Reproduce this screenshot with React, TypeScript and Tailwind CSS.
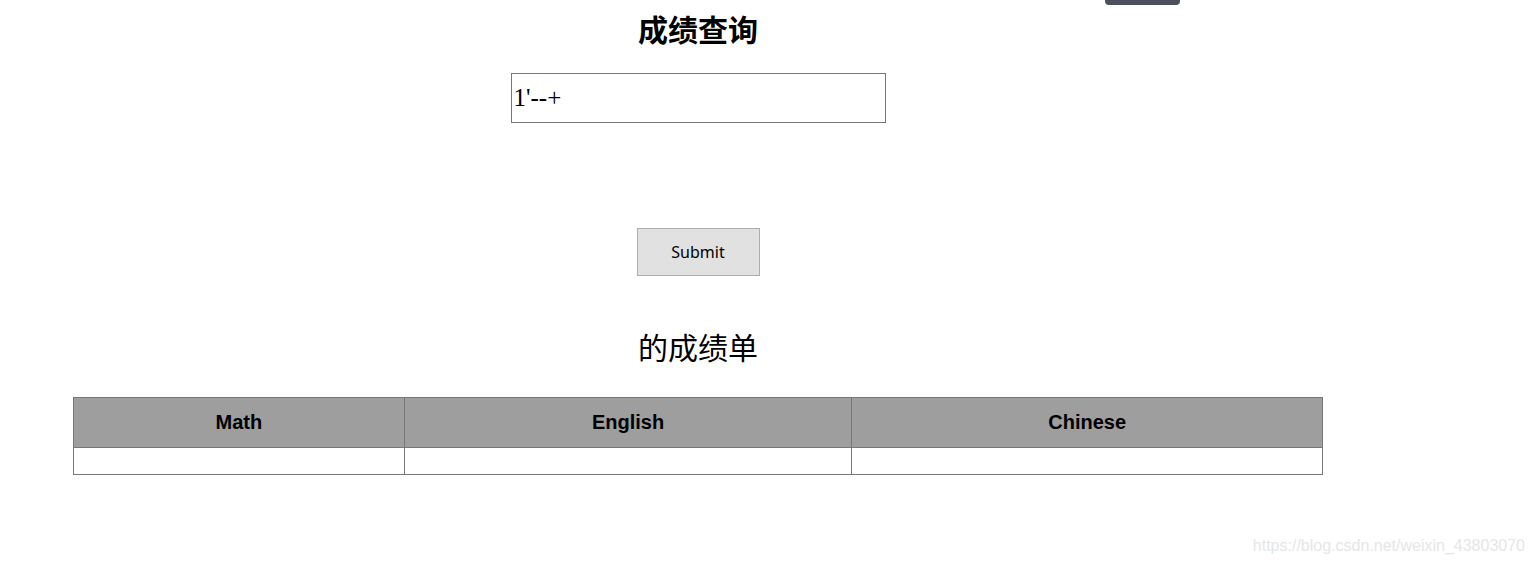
import React from "react";

export default function App() {
  return (
    <div className="relative w-full h-[564px] bg-white overflow-hidden">
      <div className="absolute left-[1105px] top-0 w-[75px] h-[5px] rounded-b-[4px] bg-[#4b505c]" />
      <div className="w-[1396px] flex flex-col items-center">
        <h1
          className="mt-[10px] text-[30px] leading-[36px] font-bold text-black"
          style={{ fontFamily: '"Noto Sans CJK SC", sans-serif' }}
        >
          成绩查询
        </h1>
        <input
          type="text"
          defaultValue="1'--+"
          className="mt-[27px] w-[375px] h-[50px] border border-[#767676] px-[2px] text-[25px] text-black outline-none"
          style={{ fontFamily: '"Liberation Serif", serif' }}
        />
        <button
          className="mt-[105px] w-[123px] h-[48px] bg-[#e1e1e1] border border-[#adadad] text-[16px] text-black"
          style={{ fontFamily: '"Noto Sans", sans-serif' }}
        >
          Submit
        </button>
        <div
          className="mt-[50px] text-[30px] leading-[40px] text-black"
          style={{ fontFamily: '"Noto Sans CJK SC", sans-serif' }}
        >
          的成绩单
        </div>
        <table
          className="mt-[31px] w-[1250px] border-collapse border border-[#777777]"
          style={{ fontFamily: '"Liberation Sans", Arial, sans-serif' }}
        >
          <thead>
            <tr className="h-[50px] bg-[#9e9e9e]">
              <th className="w-[331px] border border-[#777777] pb-[1px] text-[20px] font-bold text-black">Math</th>
              <th className="w-[448px] border border-[#777777] pb-[1px] text-[20px] font-bold text-black">English</th>
              <th className="w-[471px] border border-[#777777] pb-[1px] text-[20px] font-bold text-black">Chinese</th>
            </tr>
          </thead>
          <tbody>
            <tr className="h-[27px]">
              <td className="border border-[#777777]"></td>
              <td className="border border-[#777777]"></td>
              <td className="border border-[#777777]"></td>
            </tr>
          </tbody>
        </table>
      </div>
      <div
        className="absolute right-[10px] top-[534px] text-[16px] text-[#e6e6e6]"
        style={{ fontFamily: '"Liberation Sans", Arial, sans-serif' }}
      >
        https://blog.csdn.net/weixin_43803070
      </div>
    </div>
  );
}
